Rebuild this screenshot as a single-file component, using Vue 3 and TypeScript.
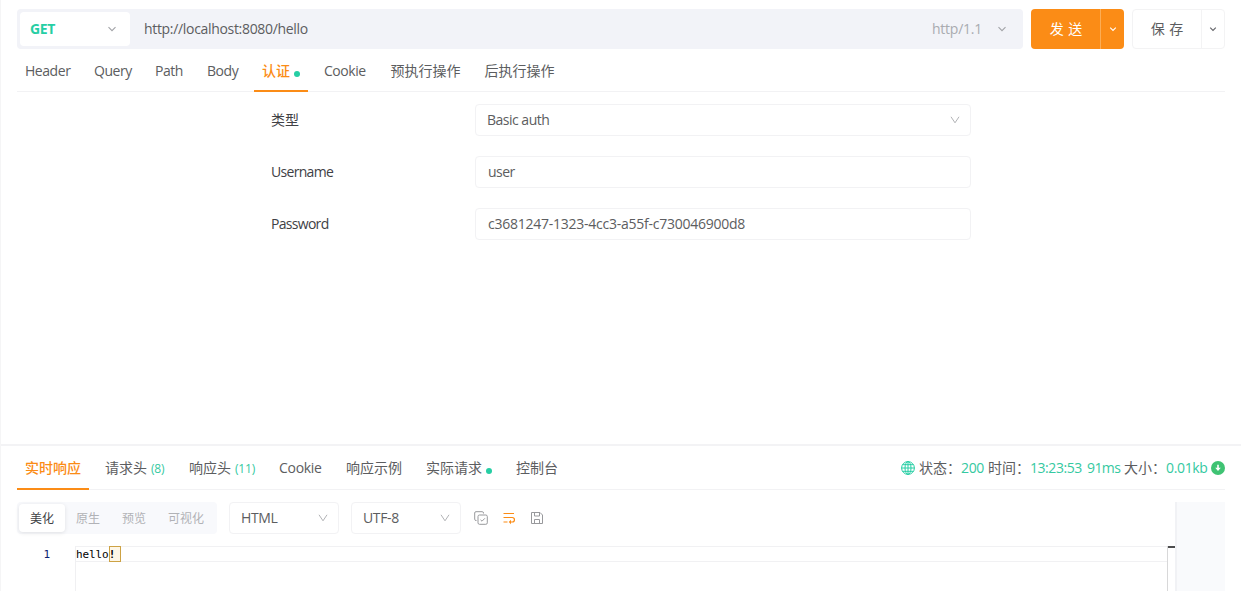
<script setup lang="ts">
interface Tab {
  label: string
  width: number
  count?: string
  dot?: boolean
  cjk?: boolean
  active?: boolean
}

const requestTabs: Tab[] = [
  { label: 'Header', width: 45 },
  { label: 'Query', width: 37 },
  { label: 'Path', width: 28 },
  { label: 'Body', width: 31 },
  { label: '认证', width: 38, dot: true, cjk: true, active: true },
  { label: 'Cookie', width: 42.5 },
  { label: '预执行操作', width: 70, cjk: true },
  { label: '后执行操作', width: 70, cjk: true },
]

const responseTabs: Tab[] = [
  { label: '实时响应', width: 56, cjk: true, active: true },
  { label: '请求头', width: 60, count: '(8)', cjk: true },
  { label: '响应头', width: 66, count: '(11)', cjk: true },
  { label: 'Cookie', width: 43 },
  { label: '响应示例', width: 56, cjk: true },
  { label: '实际请求', width: 66, dot: true, cjk: true },
  { label: '控制台', width: 42, cjk: true },
]

const views = ['美化', '原生', '预览', '可视化']
const fields = [
  { label: 'Username', value: 'user', code: false },
  { label: 'Password', value: 'c3681247-1323-4cc3-a55f-c730046900d8', code: true },
]
</script>

<template>
  <div class="page">
    <section class="request">
      <div class="url-row">
        <div class="url-bar">
          <div class="method">
            <b>GET</b>
            <svg class="chev" width="10" height="10" viewBox="0 0 10 10"><path d="M1.5 3.2 5 6.7 8.5 3.2" /></svg>
          </div>
          <span class="url">http://localhost:8080/hello</span>
          <span class="proto">http/1.1</span>
          <svg class="chev proto-chev" width="10" height="10" viewBox="0 0 10 10"><path d="M1.5 3.2 5 6.7 8.5 3.2" /></svg>
        </div>
        <div class="btn send">
          <span>发 送</span>
          <i><svg class="chev" width="8" height="8" viewBox="0 0 8 8"><path d="M1.2 2.6 4 5.4 6.8 2.6" /></svg></i>
        </div>
        <div class="btn save">
          <span>保 存</span>
          <i><svg class="chev" width="8" height="8" viewBox="0 0 8 8"><path d="M1.2 2.6 4 5.4 6.8 2.6" /></svg></i>
        </div>
      </div>

      <nav class="tabs">
        <div v-for="t in requestTabs" :key="t.label" class="tab" :class="{ active: t.active, cjk: t.cjk }" :style="{ width: t.width + 'px' }">
          {{ t.label }}<span v-if="t.dot" class="dot"></span>
        </div>
      </nav>

      <form class="auth">
        <div class="field">
          <label class="cjk">类型</label>
          <div class="box select">
            <span class="basic">Basic auth</span>
            <svg class="arrow" width="12" height="12" viewBox="0 0 12 12"><path d="M2 2.8 6 8.8 10 2.8" /></svg>
          </div>
        </div>
        <div v-for="f in fields" :key="f.label" class="field">
          <label>{{ f.label }}</label>
          <div class="box input" :class="{ code: f.code }">{{ f.value }}</div>
        </div>
      </form>
    </section>

    <section class="response">
      <nav class="tabs lower">
        <div v-for="t in responseTabs" :key="t.label" class="tab" :class="{ active: t.active, cjk: t.cjk }" :style="{ width: t.width + 'px' }">
          {{ t.label }}<span v-if="t.count" class="count">{{ t.count }}</span><span v-if="t.dot" class="dot"></span>
        </div>
        <div class="status">
          <svg class="globe" width="14" height="14" viewBox="0 0 14 14">
            <circle cx="7" cy="7" r="6.4" /><ellipse cx="7" cy="7" rx="3" ry="6.4" />
            <path d="M7 .6v12.8M.6 7h12.8M1.5 3.7h11M1.5 10.3h11" />
          </svg>
          <span class="k s1">状态：</span><span class="v v1">200</span>
          <span class="k s2">时间：</span><span class="v v2">13:23:53</span><span class="v v3">91ms</span>
          <span class="k s3">大小：</span><span class="v v4">0.01kb</span>
          <svg width="14" height="14" viewBox="0 0 14 14">
            <circle cx="7" cy="7" r="7" fill="#3fc373" />
            <path d="M6.2 3.8h1.6v3h2L7 10 4.2 6.8h2z" fill="#fff" />
          </svg>
        </div>
      </nav>

      <div class="viewer">
        <div class="main">
          <div class="tools">
            <div class="segment">
              <span v-for="(v, i) in views" :key="v" :class="{ on: i === 0 }">{{ v }}</span>
            </div>
            <div class="box select small">
              <span>HTML</span>
              <svg class="arrow" width="12" height="12" viewBox="0 0 12 12"><path d="M2 2.8 6 8.8 10 2.8" /></svg>
            </div>
            <div class="box select small">
              <span>UTF-8</span>
              <svg class="arrow" width="12" height="12" viewBox="0 0 12 12"><path d="M2 2.8 6 8.8 10 2.8" /></svg>
            </div>
            <svg class="tool" width="14" height="14" viewBox="0 0 14 14">
              <path d="M2.5 9.5H2A1.3 1.3 0 0 1 .7 8.2V2A1.3 1.3 0 0 1 2 .7h6.2A1.3 1.3 0 0 1 9.5 2v.5" />
              <rect x="4" y="4" width="9.3" height="9.3" rx="1.5" /><path d="m6.5 8.8 1.5 1.4 2.9-2.9" />
            </svg>
            <svg class="tool wrap" width="14" height="14" viewBox="0 0 14 14">
              <path d="M1.5 2.5h10.5M1.5 6.5h8.7a2 2 0 0 1 0 4.5H8M1.5 11h4" /><path class="head" d="M9 8.8v4.4L6.7 11z" />
            </svg>
            <svg class="tool" width="14" height="14" viewBox="0 0 14 14">
              <path d="M1.5 1.5h8.5l2.5 2.5v8.5h-11zM4.5 1.5v3.5h5v-3.5M4.5 12.5V8.5h5v4" />
            </svg>
          </div>
          <div class="editor">
            <div class="gutter">1</div>
            <div class="code-area">
              <div class="line">hello<span class="mark">!</span></div>
            </div>
            <div class="ruler"><i></i></div>
          </div>
        </div>
        <aside class="side"></aside>
      </div>
    </section>
  </div>
</template>

<style>
body {
  background: #fff;
  overflow: hidden;
}
</style>

<style scoped>
* {
  box-sizing: border-box;
}
.page {
  height: 591px;
  overflow: hidden;
  border-left: 1px solid #f5f5f6;
  color: #5c5d60;
  font: 14px/20px "Open Sans", "Noto Sans CJK SC", sans-serif;
  letter-spacing: -0.35px;
  white-space: nowrap;
}
.request {
  height: 444px;
  padding: 9px 16px 0;
}
.url-row {
  display: flex;
  height: 40px;
}
.url-bar {
  display: flex;
  align-items: center;
  width: 1006px;
  padding: 3px;
  border-radius: 4px;
  background: #f2f3f8;
}
.method {
  display: flex;
  align-items: center;
  justify-content: space-between;
  width: 110px;
  height: 34px;
  padding: 0 13px 0 10px;
  border-radius: 4px;
  background: #fff;
}
.method b {
  color: #26cea4;
}
.chev {
  display: block;
  fill: none;
  stroke: #a2a3a7;
  stroke-width: 1.1;
}
.url {
  flex: 1;
  margin-left: 14px;
  letter-spacing: -0.32px;
}
.proto {
  width: 50px;
  color: #a9abb0;
  letter-spacing: -0.25px;
}
.proto-chev {
  margin: 0 13px 0 15px;
}
.btn {
  display: flex;
  width: 93px;
  height: 40px;
  margin-left: 8px;
  border-radius: 4px;
  line-height: 38px;
  letter-spacing: 0;
}
.btn span {
  width: 69px;
  text-align: center;
  word-spacing: 1px;
}
.btn i {
  display: flex;
  flex: 1;
  align-items: center;
  justify-content: center;
  border-left: 1px solid #f3f3f4;
}
.send {
  color: #fff;
  background: #fb8c16;
  line-height: 40px;
}
.send span {
  padding-left: 1px;
}
.send i {
  border-color: #fcad55;
}
.send .chev {
  stroke: #fff;
}
.save {
  border: 1px solid #f3f3f4;
}
.save span {
  width: 68px;
}
.save .chev {
  stroke: #626367;
}
.tabs {
  display: flex;
  height: 43px;
  gap: 24px;
  padding: 0 8px;
  border-bottom: 1px solid #f2f2f4;
  line-height: 43px;
}
.tab {
  position: relative;
  flex: none;
  letter-spacing: -0.45px;
}
.tab.cjk,
.cjk {
  letter-spacing: 0;
}
.tab.active {
  color: #fb8c16;
  font-weight: 500;
}
.tab.active::after {
  position: absolute;
  right: -8px;
  bottom: -1px;
  left: -8px;
  height: 2px;
  background: #fb8c16;
  content: "";
}
.dot {
  display: inline-block;
  width: 6px;
  height: 6px;
  margin: 0 0 -1px 4px;
  border-radius: 50%;
  background: #26cea4;
}
.auth {
  display: grid;
  gap: 20px;
  width: 700px;
  margin: 12px 0 0 254px;
}
.field {
  display: flex;
  align-items: center;
}
.field label {
  width: 204px;
  color: #404145;
}
.field label:not(.cjk) {
  letter-spacing: -0.7px;
}
.box {
  width: 496px;
  height: 32px;
  border: 1px solid #f2f2f4;
  border-radius: 4px;
  line-height: 30px;
}
.select {
  display: flex;
  align-items: center;
  justify-content: space-between;
  padding: 0 9px 0 11px;
}
.basic {
  letter-spacing: -0.5px;
}
.input {
  padding-left: 12px;
  letter-spacing: -0.5px;
}
.input.code {
  letter-spacing: -0.25px;
}
.arrow {
  fill: none;
  stroke: #b2b3b6;
  stroke-width: 1;
}
.response {
  height: 147px;
  padding: 0 16px;
  border-top: 2px solid #f3f3f5;
}
.tabs.lower {
  height: 44px;
  padding-right: 0;
}
.lower .tab {
  letter-spacing: -0.3px;
}
.lower .cjk {
  letter-spacing: 0;
}
.tabs .count {
  margin-left: 4px;
  color: #35c9a1;
  font-size: 12px;
  letter-spacing: -0.2px;
}
.status {
  display: flex;
  align-items: center;
  margin-left: auto;
}
.k {
  letter-spacing: 0;
}
.v {
  color: #35c9a1;
}
.s1 {
  width: 42px;
  margin-left: 4px;
}
.v1 {
  width: 27px;
}
.s2,
.s3 {
  width: 42px;
}
.v2 {
  width: 57px;
  letter-spacing: -0.45px;
}
.v3 {
  width: 37px;
  letter-spacing: -0.6px;
}
.v4 {
  width: 45px;
}
.globe {
  fill: none;
  stroke: #26cea4;
}
.viewer {
  display: flex;
  height: 101px;
  padding-top: 12px;
}
.main {
  width: 1158px;
}
.side {
  flex: 1;
  border-left: 2px solid #f1f2f5;
  background: #f9fafc;
}
.tools {
  display: flex;
  align-items: center;
  height: 32px;
}
.segment {
  display: flex;
  align-items: center;
  height: 32px;
  width: 200px;
  padding-left: 2px;
  border-radius: 4px;
  background: #f8f9fc;
  color: #b1b2b6;
  font-size: 12px;
  letter-spacing: 0;
}
.segment span {
  height: 28px;
  padding: 0 11px;
  line-height: 30px;
}
.segment .on {
  border-radius: 4px;
  background: #fff;
  color: #404145;
  box-shadow: 0 1px 4px #0000001a;
}
.small {
  width: 110px;
  margin-left: 12px;
}
.tool {
  margin-left: 14px;
  fill: none;
  stroke: #98999c;
  stroke-width: 1;
}
.small + .tool {
  margin-left: 13px;
}
.wrap {
  stroke: #fb8c16;
  stroke-width: 1.2;
}
.wrap .head {
  fill: #fb8c16;
  stroke: none;
}
.editor {
  display: flex;
  height: 45px;
  margin-top: 12px;
  color: #000;
  font: 11px/16px "DejaVu Sans Mono", monospace;
  letter-spacing: -0.1px;
}
.gutter {
  width: 58px;
  padding-right: 25px;
  color: #0b216f;
  line-height: 17px;
  text-align: right;
}
.code-area {
  width: 1092px;
  border-left: 1px solid #f0f0f2;
}
.line {
  height: 16px;
  border: solid #f1f1f3;
  border-width: 1px 0;
  line-height: 15px;
}
.mark {
  display: inline-block;
  width: 12px;
  height: 16px;
  margin-top: -1px;
  border: 1px solid #cda244;
  background: #fdf6e7;
  font-weight: bold;
  line-height: 15px;
  vertical-align: top;
  text-indent: -1px;
}
.ruler {
  width: 8px;
  border-left: 1px solid #d8d8d9;
}
.ruler i {
  display: block;
  height: 2px;
  background: #4d4d4e;
}
</style>
